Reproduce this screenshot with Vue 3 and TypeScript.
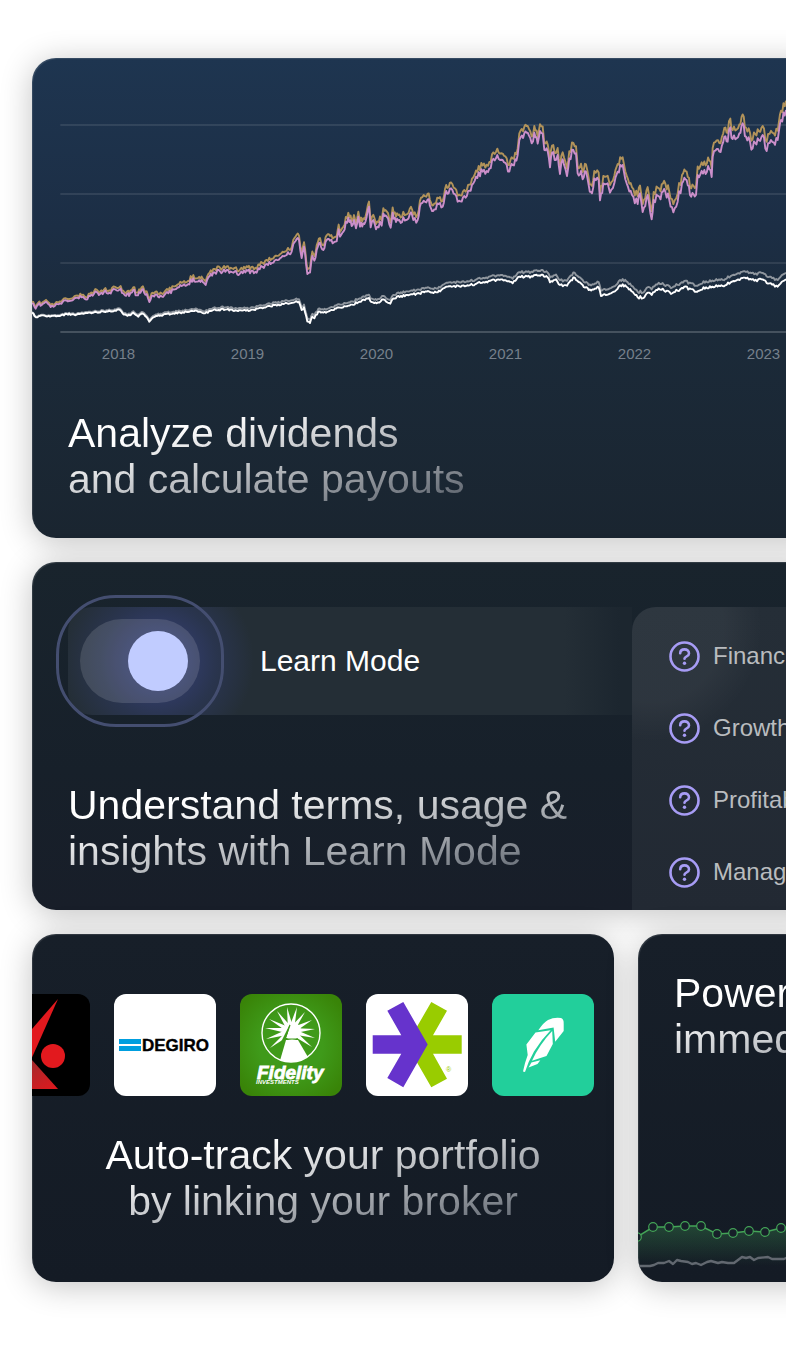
<script setup lang="ts">
import { ref } from 'vue'

type Point = [number, number]

const learnMode = ref(true)

const years = ['2018', '2019', '2020', '2021', '2022', '2023']
const terms = ['Financials', 'Growth', 'Profitability', 'Management']

const parse = (text: string): Point[] =>
  text.trim().split(/\s+/).map((pair) => pair.split(',').map(Number) as Point)

const portfolio = parse(`
96,790 107,806 115,793 125,795 138,785 152,801 165,797 180,790 200,782 215,782 232,773 245,772 262,778
270,768 290,756 300,762 312,756 328,758 345,748 362,746 370,760 375,766 385,760 387,768 400,750 410,766
425,750 440,762 448,786 455,768 470,763 485,769 505,760 525,748 545,738 560,736 580,715 590,725 605,720
617,735 625,712 640,697 660,694 680,690 700,698 720,700 740,690 750,700 770,698 775,685 800,672 820,668
840,655 860,645 875,635 880,612 890,597 897,600 905,654 912,620 922,702 930,698 937,648 943,662 950,630
960,608 970,630 980,600 990,602 1010,604 1016,568 1020,590 1030,575 1045,533 1055,558 1062,540 1068,565
1075,530 1080,560 1090,550 1100,530 1107,500 1112,562 1120,540 1128,568 1140,545 1145,557 1150,520
1160,530 1172,563 1178,518 1188,546 1198,540 1218,540 1233,517 1240,540 1253,540 1263,490 1283,478
1293,505 1303,508 1316,492 1328,500 1335,465 1353,445 1373,485 1393,468 1408,452 1428,410 1448,395
1468,385 1488,355 1508,360 1528,395 1538,375 1553,345 1558,300 1573,280 1583,278 1595,310 1603,278
1613,311 1620,273 1628,280 1633,330 1640,325 1650,382 1656,338 1668,360 1673,345 1680,402 1688,358
1701,408 1708,355 1720,330 1728,340 1733,400 1743,393 1748,418 1758,395 1766,435 1776,460 1783,415
1796,420 1800,481 1810,430 1823,430 1830,458 1843,430 1853,395 1868,375 1880,430 1896,465 1913,492
1920,460 1928,516 1943,465 1955,538 1961,480 1978,470 1996,455 2008,480 2020,517 2033,485 2046,430
2060,420 2070,465 2088,465 2093,405 2113,390 2128,388 2135,411 2138,350 2158,335 2173,290 2183,305
2191,262 2198,297 2218,280 2228,250 2238,290 2258,325 2273,295 2288,285 2300,333 2313,300 2333,300
2343,240 2358,210`)

const benchmark = parse(`
96,818 108,832 125,826 150,830 180,828 200,822 230,824 270,818 320,814 360,810 372,824 390,826 400,818
415,830 425,820 440,832 448,845 460,832 490,824 520,820 560,816 590,812 615,820 640,810 680,808 710,812
750,812 800,800 850,792 885,786 897,786 905,810 912,802 922,845 930,849 937,830 943,835 955,815 970,818
990,812 1016,802 1045,797 1075,787 1107,774 1112,785 1130,790 1150,778 1171,791 1180,775 1218,765
1258,760 1288,755 1313,757 1343,740 1398,738 1458,725 1503,718 1538,730 1558,710 1598,710 1628,704
1643,712 1650,727 1668,718 1680,735 1701,737 1720,712 1748,735 1766,750 1796,742 1803,768 1833,760
1868,733 1898,755 1913,772 1933,772 1943,758 1955,765 1968,750 1988,746 2013,762 2053,740 2088,755
2118,742 2168,738 2208,722 2238,715 2263,722 2288,718 2308,730 2333,740 2358,718`)

/* Daily ticks between the main turning points, from a fixed seed. */
function ticks(points: Point[], amplitude: number, growth: number, seed: number): Point[] {
  let state = seed
  const next = () => {
    state = (state * 16807) % 2147483647
    return state / 2147483647 - 0.5
  }
  const out: Point[] = []
  points.forEach(([x, y], i) => {
    out.push([x, y])
    const following = points[i + 1]
    if (!following) return
    const steps = Math.max(1, Math.round((following[0] - x) / 4))
    for (let s = 1; s < steps; s++) {
      const t = s / steps
      const px = x + (following[0] - x) * t
      const size = amplitude + (growth * px) / 2358
      out.push([px, y + (following[1] - y) * t + next() * size])
    }
  })
  return out
}

const toLine = (points: Point[], lift = 0, slope = 0): string =>
  points.map(([x, y]) => `${x.toFixed(1)},${(y - lift - (slope * x) / 2358).toFixed(1)}`).join(' ')

const portfolioTicks = ticks(portfolio, 8, 22, 11)
const benchmarkTicks = ticks(benchmark, 4, 5, 29)

const gridRows = [255, 462, 669]

const signals: Point[] = [
  [-1, 25], [15, 15], [31, 15], [47, 14], [63, 14], [79, 22], [95, 21], [111, 19], [127, 20], [143, 16], [159, 14],
]
const signalLine = toLine(signals)
const signalArea = `${signalLine} 159,54 -1,54`

const rayTips: Point[] = [
  [47, 13], [57, 13], [37, 17], [65, 18], [29, 25], [72, 26], [25, 34], [75, 35], [26, 45], [75, 44], [30, 54], [72, 53],
]
const rays = rayTips.map(([x, y]) => {
  const dx = x - 51
  const dy = y - 37
  const length = Math.hypot(dx, dy)
  const nx = (-dy / length) * 3
  const ny = (dx / length) * 3
  return `${x},${y} ${(51 + nx).toFixed(1)},${(37 + ny).toFixed(1)} ${(51 - nx).toFixed(1)},${(37 - ny).toFixed(1)}`
})
</script>

<template>
  <main class="features">
    <section class="card card-bleed card-dividends">
      <div class="history">
        <svg class="history-plot" viewBox="96 54 2262 828" preserveAspectRatio="none" role="img" aria-label="Portfolio history">
          <line v-for="y in gridRows" :key="y" class="grid-line" x1="181" :y1="y" x2="2358" :y2="y" />
          <line class="grid-line base-line" x1="181" y1="876" x2="2358" y2="876" />
          <polyline class="series series-gold" :points="toLine(portfolioTicks, 4, 24)" />
          <polyline class="series series-pink" :points="toLine(portfolioTicks)" />
          <polyline class="series series-grey" :points="toLine(benchmarkTicks, 1, 19)" />
          <polyline class="series series-white" :points="toLine(benchmarkTicks)" />
        </svg>
        <ol class="years">
          <li v-for="year in years" :key="year">{{ year }}</li>
        </ol>
      </div>
      <h2 class="headline">Analyze dividends<br />and calculate payouts</h2>
    </section>

    <section class="card card-bleed card-learn">
      <div class="learn-main">
        <label class="learn-strip">
          <span class="switch">
            <input v-model="learnMode" type="checkbox" role="switch" />
          </span>
          <span class="learn-label">Learn Mode</span>
        </label>
        <h2 class="headline">Understand terms, usage &amp;<br />insights with Learn Mode</h2>
      </div>
      <ul class="terms">
        <li v-for="term in terms" :key="term">
          <svg class="help" viewBox="0 0 31 31" aria-hidden="true">
            <circle cx="15.5" cy="15.5" r="14" />
            <path d="M11.200 12.200C11.300 9.900 13.100 8.400 15.500 8.400C18.200 8.400 20 10.100 20 12.400C20 15.400 15.500 15.500 15.500 17.700" />
            <circle class="dot" cx="15.500" cy="22.200" r="1.700" />
          </svg>
          {{ term }}
        </li>
      </ul>
    </section>

    <div class="pair">
      <section class="card card-brokers">
        <div class="brokers">
          <svg class="broker" viewBox="0 0 102 102" role="img" aria-label="Interactive Brokers">
            <defs>
              <linearGradient id="ib-shade" x1="0" y1="0" x2="1" y2="1">
                <stop offset="0.3" stop-color="#a52a2c" />
                <stop offset="1" stop-color="#e0181d" />
              </linearGradient>
            </defs>
            <rect width="102" height="102" fill="#000" />
            <polygon points="70,5 30,51 30,95" fill="#e2191e" />
            <polygon points="43,65 70,95 18,95" fill="url(#ib-shade)" />
            <circle cx="65" cy="62" r="12" fill="#e2191e" />
          </svg>
          <svg class="broker" viewBox="0 0 102 102" role="img" aria-label="DEGIRO">
            <rect width="102" height="102" fill="#fff" />
            <rect x="5" y="45" width="22" height="5" fill="#009fdf" />
            <rect x="5" y="52" width="22" height="5" fill="#009fdf" />
            <text class="degiro" x="28" y="57">DEGIRO</text>
          </svg>
          <svg class="broker" viewBox="0 0 102 102" role="img" aria-label="Fidelity Investments">
            <defs>
              <radialGradient id="fidelity-green" cx="0.5" cy="0.5" r="0.62">
                <stop offset="0.5" stop-color="#3f9a1a" />
                <stop offset="1" stop-color="#398408" />
              </radialGradient>
              <clipPath id="fidelity-disc"><circle cx="51" cy="39" r="29" /></clipPath>
            </defs>
            <rect width="102" height="102" fill="url(#fidelity-green)" />
            <g fill="#fff">
              <polygon v-for="ray in rays" :key="ray" :points="ray" />
              <circle cx="52" cy="37" r="9" />
            </g>
            <g clip-path="url(#fidelity-disc)">
              <polygon points="50,30 30,70 41,70" fill="#3f9a1a" />
              <polygon points="51,31 57,44 46,44" fill="#fff" />
              <polygon points="46,46 58,46 72,70 39,70" fill="#fff" />
              <path d="M50 31L45 45H58" fill="none" stroke="#3f9a1a" stroke-width="1.200" />
            </g>
            <circle cx="51" cy="39" r="29" fill="none" stroke="#fff" stroke-width="1.400" />
            <text class="fidelity" x="17" y="85">Fidelity</text>
            <text class="fidelity-sub" x="16" y="90">INVESTMENTS</text>
          </svg>
          <svg class="broker" viewBox="0 0 102 102" role="img" aria-label="E*TRADE">
            <rect width="102" height="102" fill="#fff" />
            <polygon
              points="65.300,8 81,16.700 67,41.300 95.700,41.300 95.700,59.700 67,59.700 81,84.700 65.300,93.300 45,58 45,43"
              fill="#99cc00"
            />
            <polygon
              points="21.300,16.700 37.300,8 61.700,50.500 37.300,93.300 21.300,84 35.300,59.700 6.700,59.700 6.700,41.300 35.300,41.300"
              fill="#6633cc"
            />
            <text class="registered" x="80" y="78">®</text>
          </svg>
          <svg class="broker" viewBox="0 0 102 102" role="img" aria-label="Robinhood">
            <rect width="102" height="102" fill="#22cf9b" />
            <g fill="#fff">
              <path d="M46.300 36.300Q52 28 56 26Q62 23 69 24Q72 25 71.700 30V37L63.200 47.700L61.600 33.600Z" />
              <path d="M58.600 36.300L43.500 38.500L34.400 50.500L35.700 61Q33 68 31 77.600L33 78Q36 68 42 57.500Q49 46 58.600 36.300Z" />
              <path d="M60.200 37L60.800 50L54.500 62L40 66.800Q47 51 60.200 37Z" />
              <path d="M36.600 73.600L39.400 68.600L48.300 66.300L45.500 70Z" />
            </g>
          </svg>
        </div>
        <h2 class="headline headline-centered">Auto-track your portfolio<br />by linking your broker</h2>
      </section>

      <section class="card card-bleed card-signals">
        <h2 class="headline headline-wide">Powerful<br />immediately</h2>
        <svg class="signals" viewBox="0 0 148 70" preserveAspectRatio="xMinYMax slice" role="img" aria-label="Signal history">
          <defs>
            <linearGradient id="signal-fade" x1="0" y1="0" x2="0" y2="1">
              <stop offset="0" stop-color="#3f9e55" stop-opacity="0.320" />
              <stop offset="1" stop-color="#3f9e55" stop-opacity="0" />
            </linearGradient>
          </defs>
          <polygon :points="signalArea" fill="url(#signal-fade)" />
          <polyline class="signal-line" :points="signalLine" />
          <circle v-for="point in signals" :key="point[0]" class="signal-dot" :cx="point[0]" :cy="point[1]" r="4.300" />
          <polyline
            class="signal-base"
            points="0,54 12,54 16,53 20,51 26,51 31,49 35,52 39,48 43,49 50,50 54,52 58,51 63,53 69,50 73,49 80,51 84,50 90,51 96,51 100,48 104,45 108,46 112,45 116,48 120,46 130,45 134,47 146,47 150,45"
          />
        </svg>
      </section>
    </div>
  </main>
</template>

<style>
body {
  background: #fff;
}
</style>

<style scoped>
.features {
  --bleed: 40px;
  display: flex;
  flex-direction: column;
  gap: 24px;
  padding: 58px 0 63px 32px;
  overflow: hidden;
  color: #fff;
  font-family: "Liberation Sans", Arial, sans-serif;
}

.card {
  position: relative;
  overflow: hidden;
  box-sizing: border-box;
  min-width: 0;
  border-radius: 24px;
  box-shadow:
    0 4px 32px rgba(0, 0, 0, 0.24),
    inset 1px 1px 1px rgba(255, 255, 255, 0.12);
}

.card-bleed {
  margin-right: calc(-1 * var(--bleed));
  padding-right: var(--bleed);
}

.headline {
  width: fit-content;
  margin: 0;
  font-size: 41px;
  font-weight: 400;
  line-height: 46px;
  white-space: nowrap;
  color: transparent;
  background: linear-gradient(to bottom right, #fff 24%, #5d646e 98%);
  background-clip: text;
  -webkit-background-clip: text;
}

.headline-centered {
  margin: 0 auto;
  text-align: center;
}

.headline-wide {
  min-width: 480px;
}

.card-dividends {
  padding-bottom: 36px;
  background: linear-gradient(#1e3550 0, #1c2e45 35%, #1b2a39 58%, #1a2530 100%);
}

.history-plot {
  display: block;
  width: 100%;
  height: 276px;
}

.grid-line {
  stroke: rgba(255, 255, 255, 0.13);
  stroke-width: 1.5px;
  vector-effect: non-scaling-stroke;
}

.base-line {
  stroke: rgba(255, 255, 255, 0.25);
}

.series {
  fill: none;
  stroke-width: 1.9px;
  stroke-linejoin: round;
  vector-effect: non-scaling-stroke;
}

.series-gold {
  stroke: #b2935a;
}

.series-pink {
  stroke: #cc8fca;
}

.series-grey {
  stroke: #8f969e;
}

.series-white {
  stroke: #fff;
}

.years {
  display: grid;
  grid-template-columns: repeat(6, 129px);
  margin: 0 0 46px;
  padding: 10px 0 0 22px;
  list-style: none;
  font-size: 15px;
  line-height: 20px;
  text-align: center;
  color: #76808b;
}

.card-dividends .headline {
  margin-left: 36px;
}

.card-learn {
  display: flex;
  padding-top: 45px;
  padding-right: 0;
  background: linear-gradient(#19242d, #17202a 60%, #181e29);
}

.learn-main {
  flex: 0 1 600px;
  min-width: 0;
  padding-bottom: 36px;
}

.learn-strip {
  display: flex;
  align-items: center;
  gap: 60px;
  height: 108px;
  margin: 0 0 67px 36px;
  padding-left: 12px;
  border-radius: 24px 0 0 24px;
  background:
    radial-gradient(circle at 90px 54px, rgba(62, 72, 150, 0.6) 20px, rgba(55, 68, 135, 0.3) 58px, transparent 96px),
    linear-gradient(90deg, #242e36 88%, #1c262f 98%);
  cursor: pointer;
}

.switch {
  position: relative;
  display: flex;
}

.switch::before {
  content: "";
  position: absolute;
  inset: -24px;
  border: 3px solid #444e70;
  border-radius: 60px;
}

.switch input {
  display: flex;
  align-items: center;
  justify-content: flex-start;
  box-sizing: border-box;
  width: 120px;
  height: 84px;
  margin: 0;
  padding: 12px;
  appearance: none;
  border-radius: 42px;
  background: rgba(255, 255, 255, 0.13);
  cursor: pointer;
}

.switch input:checked {
  justify-content: flex-end;
}

.switch input::before {
  content: "";
  width: 60px;
  height: 60px;
  border-radius: 50%;
  background: #c1ccff;
}

.learn-label {
  font-size: 30px;
  line-height: 36px;
  white-space: nowrap;
}

.learn-main .headline {
  margin-left: 36px;
}

.terms {
  flex: 1;
  min-width: 0;
  margin: 0;
  padding: 13px 0 0 37px;
  list-style: none;
  border-radius: 24px 0 0 0;
  overflow: hidden;
  font-size: 24px;
  line-height: 72px;
  color: #b9bcbf;
  background:
    radial-gradient(ellipse 110px 115px at 20px 20px, rgba(255, 255, 255, 0.045) 65%, transparent),
    linear-gradient(#252e37, #222933);
}

.terms li {
  display: flex;
  align-items: center;
  gap: 13px;
  white-space: nowrap;
}

.help {
  flex: none;
  width: 31px;
  height: 31px;
  fill: none;
  stroke: #a79cf5;
  stroke-width: 2.6;
  stroke-linecap: round;
}

.help .dot {
  fill: #a79cf5;
  stroke: none;
}

.pair {
  display: grid;
  grid-template-columns: minmax(0, 582px) minmax(0, 1fr);
  gap: 24px;
}

.card-brokers {
  padding: 60px 0 58px;
  background: linear-gradient(#171f29, #141b25);
}

.brokers {
  display: flex;
  gap: 24px;
  margin: 0 0 36px -44px;
}

.broker {
  flex: none;
  width: 102px;
  height: 102px;
  border-radius: 12px;
}

.degiro {
  font-size: 17px;
  font-weight: 700;
  fill: #000;
  stroke: #000;
  stroke-width: 0.4px;
}

.fidelity {
  font-size: 19px;
  font-weight: 700;
  font-style: italic;
  fill: #fff;
  stroke: #fff;
  stroke-width: 0.8px;
}

.fidelity-sub {
  font-size: 6px;
  font-weight: 700;
  font-style: italic;
  fill: #fff;
}

.registered {
  font-size: 7px;
  fill: #99cc00;
}

.card-signals {
  display: flex;
  flex-direction: column;
  justify-content: space-between;
  background: linear-gradient(#171f29, #141b25);
}

.card-signals .headline {
  margin: 36px 0 0 36px;
}

.signals {
  display: block;
  width: 100%;
  height: 70px;
}

.signal-line {
  fill: none;
  stroke: #43a457;
  stroke-width: 1.6;
}

.signal-dot {
  fill: #171f29;
  stroke: #43a457;
  stroke-width: 1.2;
}

.signal-base {
  fill: none;
  stroke: #626870;
  stroke-width: 2.4;
  stroke-linejoin: round;
}
</style>
